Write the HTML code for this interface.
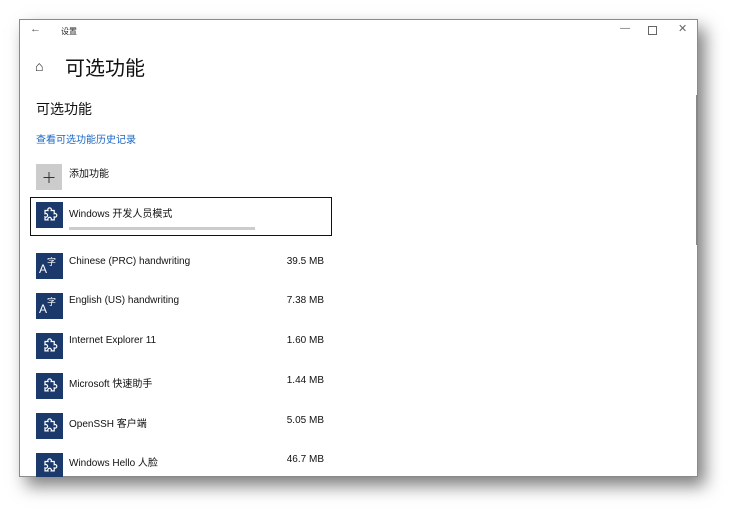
<!DOCTYPE html>
<html><head><meta charset="utf-8"><style>
body{margin:0;width:745px;height:524px;background:#fff;position:relative;overflow:hidden;font-family:"Liberation Sans","Noto Sans CJK SC",sans-serif;color:#000}
.win{position:absolute;left:19px;top:19px;width:679px;height:458px;background:#fff;border:1px solid #8a8a8a;box-sizing:border-box;box-shadow:7px 9px 16px rgba(0,0,0,.5)}
.abs{position:absolute;white-space:nowrap}
.ic{position:absolute;left:16px;width:27px;height:26px;background:#1b3a6b;overflow:hidden}
.ic svg{position:absolute;left:0;top:0}
.t{font-size:10px;color:#111}
.sz{font-size:10px;color:#111;right:373px}
</style></head><body>
<div class="win">
 <div class="abs" style="left:10px;top:3px;font-size:11px;color:#555">←</div>
 <div class="abs" style="left:41px;top:6px;font-size:8px;color:#222">设置</div>
 <div class="abs" style="left:600px;top:3px;font-size:10px;color:#666">—</div>
 <div class="abs" style="left:628px;top:6px;width:7px;height:7px;border:1px solid #666"></div>
 <div class="abs" style="left:658px;top:2px;font-size:11px;color:#666">✕</div>
 <div class="abs" style="left:676px;top:75px;width:1px;height:150px;background:#888"></div>
 <div class="abs" style="left:15px;top:38px;font-size:14px;color:#222">⌂</div>
 <div class="abs" style="left:45px;top:32px;font-size:20px;color:#111">可选功能</div>
 <div class="abs" style="left:16px;top:79px;font-size:14px;color:#111">可选功能</div>
 <div class="abs" style="left:16px;top:111px;font-size:10px;color:#1a67c4">查看可选功能历史记录</div>
 <div class="abs" style="left:16px;top:144px;width:26px;height:26px;background:#ccc"><svg width="26" height="26"><path d="M13 8v11M7.5 13.5h11" stroke="#333" stroke-width="1"/></svg></div>
 <div class="abs t" style="left:49px;top:145px">添加功能</div>
 <div class="abs" style="left:10px;top:177px;width:302px;height:39px;border:1.5px solid #111;box-sizing:border-box"></div>
 <div class="ic" style="top:182px"><svg width="27" height="26" viewBox="0 0 27 26"><path d="M9 8.5h3a1.8 1.8 0 1 1 3.2 0h3v3.2a1.8 1.8 0 1 1 0 3.2v3h-3a1.8 1.8 0 1 0 -3.2 0h-3v-3a1.8 1.8 0 1 0 0 -3.2z" fill="none" stroke="#fff" stroke-width="1.2"/></svg></div>
 <div class="abs t" style="left:49px;top:185px">Windows 开发人员模式</div>
 <div class="abs" style="left:49px;top:207px;width:186px;height:3px;background:#ccc"></div>

 <div class="ic" style="top:233px"><span class="abs" style="left:3px;top:9px;color:#fff;font-size:12px">A</span><span class="abs" style="left:11px;top:2px;color:#fff;font-size:9px">字</span></div>
 <div class="abs t" style="left:49px;top:236px">Chinese (PRC) handwriting</div><div class="abs sz" style="top:236px">39.5 MB</div>

 <div class="ic" style="top:273px"><span class="abs" style="left:3px;top:9px;color:#fff;font-size:12px">A</span><span class="abs" style="left:11px;top:2px;color:#fff;font-size:9px">字</span></div>
 <div class="abs t" style="left:49px;top:275px">English (US) handwriting</div><div class="abs sz" style="top:275px">7.38 MB</div>

 <div class="ic" style="top:313px"><svg width="27" height="26" viewBox="0 0 27 26"><path d="M9 8.5h3a1.8 1.8 0 1 1 3.2 0h3v3.2a1.8 1.8 0 1 1 0 3.2v3h-3a1.8 1.8 0 1 0 -3.2 0h-3v-3a1.8 1.8 0 1 0 0 -3.2z" fill="none" stroke="#fff" stroke-width="1.2"/></svg></div>
 <div class="abs t" style="left:49px;top:315px">Internet Explorer 11</div><div class="abs sz" style="top:315px">1.60 MB</div>

 <div class="ic" style="top:353px"><svg width="27" height="26" viewBox="0 0 27 26"><path d="M9 8.5h3a1.8 1.8 0 1 1 3.2 0h3v3.2a1.8 1.8 0 1 1 0 3.2v3h-3a1.8 1.8 0 1 0 -3.2 0h-3v-3a1.8 1.8 0 1 0 0 -3.2z" fill="none" stroke="#fff" stroke-width="1.2"/></svg></div>
 <div class="abs t" style="left:49px;top:355px">Microsoft 快速助手</div><div class="abs sz" style="top:355px">1.44 MB</div>

 <div class="ic" style="top:393px"><svg width="27" height="26" viewBox="0 0 27 26"><path d="M9 8.5h3a1.8 1.8 0 1 1 3.2 0h3v3.2a1.8 1.8 0 1 1 0 3.2v3h-3a1.8 1.8 0 1 0 -3.2 0h-3v-3a1.8 1.8 0 1 0 0 -3.2z" fill="none" stroke="#fff" stroke-width="1.2"/></svg></div>
 <div class="abs t" style="left:49px;top:395px">OpenSSH 客户端</div><div class="abs sz" style="top:395px">5.05 MB</div>

 <div class="ic" style="top:433px;height:24px"><svg width="27" height="26" viewBox="0 0 27 26"><path d="M9 8.5h3a1.8 1.8 0 1 1 3.2 0h3v3.2a1.8 1.8 0 1 1 0 3.2v3h-3a1.8 1.8 0 1 0 -3.2 0h-3v-3a1.8 1.8 0 1 0 0 -3.2z" fill="none" stroke="#fff" stroke-width="1.2"/></svg></div>
 <div class="abs t" style="left:49px;top:434px">Windows Hello 人脸</div><div class="abs sz" style="top:434px">46.7 MB</div>
</div>
</body></html>
